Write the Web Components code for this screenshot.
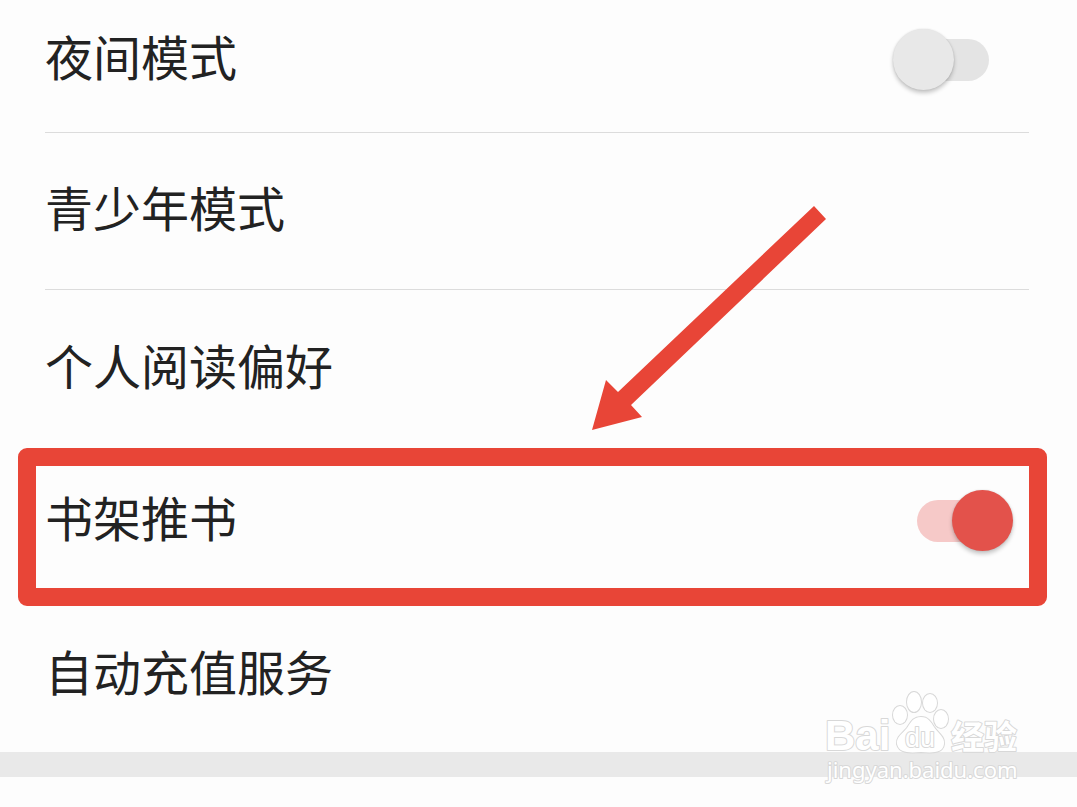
<!DOCTYPE html>
<html lang="zh-CN">
<head>
<meta charset="utf-8">
<meta name="viewport" content="width=device-width, initial-scale=1">
<title>设置</title>
<style>
  body { margin: 0; background: #fdfdfd; color: #222; font-family: "Noto Sans CJK SC", sans-serif; }
</style>
</head>
<body>
<settings-page>
  <settings-row divided first label="夜间模式"><toggle-switch label="夜间模式"></toggle-switch></settings-row>
  <settings-row divided label="青少年模式"></settings-row>
  <settings-row label="个人阅读偏好"></settings-row>
  <settings-row marked label="书架推书"><toggle-switch label="书架推书" checked></toggle-switch></settings-row>
  <settings-row last label="自动充值服务"></settings-row>
  <section-gap></section-gap>
  <pointer-arrow slot="overlay"></pointer-arrow>
  <site-watermark slot="overlay"></site-watermark>
</settings-page>
<script>
class SettingsPage extends HTMLElement {
  constructor() {
    super();
    this.attachShadow({ mode: 'open' }).innerHTML = `
      <style>
        :host { display: block; position: relative; min-height: 100vh; overflow: hidden; }
        main { display: flex; flex-direction: column; }
      </style>
      <main><slot></slot></main>
      <slot name="overlay"></slot>`;
  }
}

class SettingsRow extends HTMLElement {
  constructor() {
    super();
    this.attachShadow({ mode: 'open' }).innerHTML = `
      <style>
        :host { display: block; position: relative; box-sizing: border-box; height: 158px; padding: 0 48px 0 45px; }
        :host([divided]) { height: 157px; }
        :host([first]) { height: 133px; }
        :host([last]) { height: 146px; }
        .row { box-sizing: border-box; height: 100%; display: flex; align-items: center; justify-content: space-between; padding-right: 16px; }
        :host([divided]) .row { border-bottom: 1px solid #dcdcdc; }
        :host([first]) .row, :host([marked]) .row { padding-bottom: 12px; }
        :host([last]) .row { padding-bottom: 8px; }
        .label { padding-bottom: 10px; font-size: 48px; line-height: 72px; white-space: nowrap; }
        .mark { display: none; }
        :host([marked]) .mark { display: block; position: absolute; inset: 0 30px 0 18px; border: 18px solid #e84537; border-radius: 9px; pointer-events: none; }
      </style>
      <div class="row"><span class="label"></span><slot></slot></div>
      <div class="mark"></div>`;
  }
  connectedCallback() {
    this.shadowRoot.querySelector('.label').textContent = this.getAttribute('label');
  }
}

class ToggleSwitch extends HTMLElement {
  constructor() {
    super();
    this.attachShadow({ mode: 'open' }).innerHTML = `
      <style>
        :host { display: block; }
        input { appearance: none; display: flex; align-items: center; position: relative; width: 120px; height: 62px; margin: 0; padding: 0 24px; box-sizing: border-box; cursor: pointer; }
        input::before { content: ""; flex: 1; height: 42px; border-radius: 21px; background: #e4e4e4; }
        input::after { content: ""; position: absolute; left: 0; top: 0; width: 61px; height: 61px; border-radius: 50%; background: #e8e8e8; box-shadow: 0 3px 4px rgba(0,0,0,.22), 0 0 2px rgba(0,0,0,.12); }
        input:checked::before { background: #f6c9c8; }
        input:checked::after { left: auto; right: 0; background: #e3524b; }
      </style>
      <input type="checkbox" role="switch">`;
  }
  connectedCallback() {
    const input = this.shadowRoot.querySelector('input');
    input.checked = this.hasAttribute('checked');
    input.setAttribute('aria-label', this.getAttribute('label'));
  }
}

class SectionGap extends HTMLElement {
  constructor() {
    super();
    this.attachShadow({ mode: 'open' }).innerHTML = `
      <style>:host { display: block; height: 25px; background: #e9e9e9; }</style>`;
  }
}

class PointerArrow extends HTMLElement {
  constructor() {
    super();
    this.attachShadow({ mode: 'open' }).innerHTML = `
      <style>
        :host { display: block; position: absolute; top: 206px; right: 250px; pointer-events: none; }
        svg { display: block; }
      </style>
      <svg width="235" height="224" viewBox="0 0 235 224" aria-hidden="true">
        <path fill="#e84537" d="M222 0 234 13 39 199 50 211 0 224 14 174 26 186Z"/>
      </svg>`;
  }
}

class SiteWatermark extends HTMLElement {
  constructor() {
    super();
    this.attachShadow({ mode: 'open' }).innerHTML = `
      <style>
        :host { display: block; position: absolute; top: 687px; right: 53px; pointer-events: none; }
        svg { display: block; }
        g { fill: #fff; stroke: #d8d8d8; stroke-width: 2px; stroke-linejoin: round; paint-order: stroke; }
        .latin { font: 700 42px "Liberation Sans", sans-serif; }
        .du { font: 400 27px "Liberation Sans", sans-serif; }
        .cjk { font: 700 33px "Noto Sans CJK SC", sans-serif; }
        .url { font: 400 22px "Noto Sans", sans-serif; }
      </style>
      <svg width="200" height="100" viewBox="0 0 200 100">
        <g>
          <text class="latin" x="1" y="63">Bai</text>
          <ellipse cx="76" cy="28" rx="7" ry="9"/>
          <ellipse cx="90" cy="15" rx="7" ry="10"/>
          <ellipse cx="106" cy="16" rx="7" ry="9"/>
          <ellipse cx="117" cy="32" rx="7" ry="9"/>
          <path d="M97 30C104 30 107 35 110 40C114 46 121 50 120 57C119 66 109 66 97 65C85 66 75 66 73 57C72 50 79 46 83 41C87 35 89 30 97 30Z"/>
          <text class="du" x="81" y="60">du</text>
          <text class="cjk" x="127" y="62">经验</text>
          <text class="url" x="3" y="91">jingyan.baidu.com</text>
        </g>
      </svg>`;
  }
}

customElements.define('settings-page', SettingsPage);
customElements.define('settings-row', SettingsRow);
customElements.define('toggle-switch', ToggleSwitch);
customElements.define('section-gap', SectionGap);
customElements.define('pointer-arrow', PointerArrow);
customElements.define('site-watermark', SiteWatermark);
</script>
</body>
</html>
